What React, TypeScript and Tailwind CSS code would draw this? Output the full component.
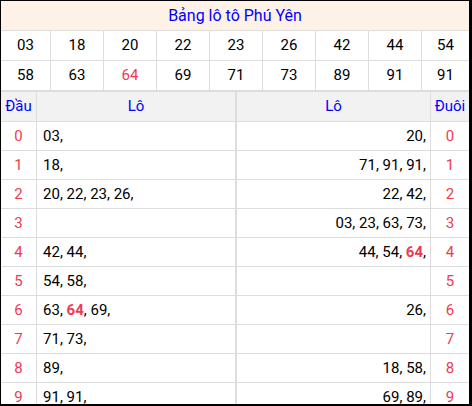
const top = ["03", "18", "20", "22", "23", "26", "42", "44", "54"];
const bottom = ["58", "63", "64", "69", "71", "73", "89", "91", "91"];

const rows: { head: string[]; tail: string[] }[] = [
  { head: ["03"], tail: ["20"] },
  { head: ["18"], tail: ["71", "91", "91"] },
  { head: ["20", "22", "23", "26"], tail: ["22", "42"] },
  { head: [], tail: ["03", "23", "63", "73"] },
  { head: ["42", "44"], tail: ["44", "54", "64"] },
  { head: ["54", "58"], tail: [] },
  { head: ["63", "64", "69"], tail: ["26"] },
  { head: ["71", "73"], tail: [] },
  { head: ["89"], tail: ["18", "58"] },
  { head: ["91", "91"], tail: ["69", "89"] },
];

const Nums = ({ list }: { list: string[] }) => (
  <span>
    {list.map((n, i) => (
      <span key={i}>
        {n === "64" ? <b className="font-bold text-[#ef3b4f]">{n}</b> : n},
        {i < list.length - 1 ? " " : ""}
      </span>
    ))}
  </span>
);

export default function App() {
  return (
    <div className="w-[472px] h-[406px] overflow-hidden border-t border-l border-r-[3px] border-b-2 border-black bg-white font-['Roboto',sans-serif] text-[15px] text-black">
      <div className="h-[30px] flex items-center justify-center bg-[#fef2e6] border-b border-[#dddddd] text-[16px] text-[#0000ff]">
        Bảng lô tô Phú Yên
      </div>

      <div className="grid grid-cols-[50px_repeat(7,53px)_1fr]">
        {top.map((n, i) => (
          <div
            key={"t" + i}
            className={`h-[30px] flex items-center justify-center border-b border-[#dddddd] ${i < 8 ? "border-r" : ""}`}
          >
            {n}
          </div>
        ))}
        {bottom.map((n, i) => (
          <div
            key={"b" + i}
            className={`h-[31px] flex items-center justify-center border-b-2 border-[#dddddd] ${i < 8 ? "border-r" : ""} ${n === "64" ? "text-[#ef3b4f]" : ""}`}
          >
            {n}
          </div>
        ))}
      </div>

      <div className="grid grid-cols-[36px_200px_194px_1fr]">
        <div className="h-[30px] flex items-center justify-center bg-[#f2f2f2] border-b border-r border-[#dddddd] text-[#0000ff]">
          Đầu
        </div>
        <div className="h-[30px] flex items-center justify-center bg-[#f2f2f2] border-b border-r-2 border-[#dddddd] text-[#0000ff]">
          Lô
        </div>
        <div className="h-[30px] flex items-center justify-center bg-[#f2f2f2] border-b border-r border-[#dddddd] text-[#0000ff]">
          Lô
        </div>
        <div className="h-[30px] flex items-center justify-center bg-[#f2f2f2] border-b border-[#dddddd] text-[#0000ff]">
          Đuôi
        </div>

        {rows.map((r, i) => (
          <div key={i} className="contents">
            <div className="h-[29px] flex items-center justify-center border-b border-r border-[#dddddd] text-[#ef3b4f]">
              {i}
            </div>
            <div className="h-[29px] flex items-center px-1.5 border-b border-r-2 border-[#dddddd] whitespace-nowrap">
              <Nums list={r.head} />
            </div>
            <div className="h-[29px] flex items-center justify-end pr-1 border-b border-r border-[#dddddd] whitespace-nowrap">
              <Nums list={r.tail} />
            </div>
            <div className="h-[29px] flex items-center justify-center border-b border-[#dddddd] text-[#ef3b4f]">
              {i}
            </div>
          </div>
        ))}
      </div>
    </div>
  );
}
